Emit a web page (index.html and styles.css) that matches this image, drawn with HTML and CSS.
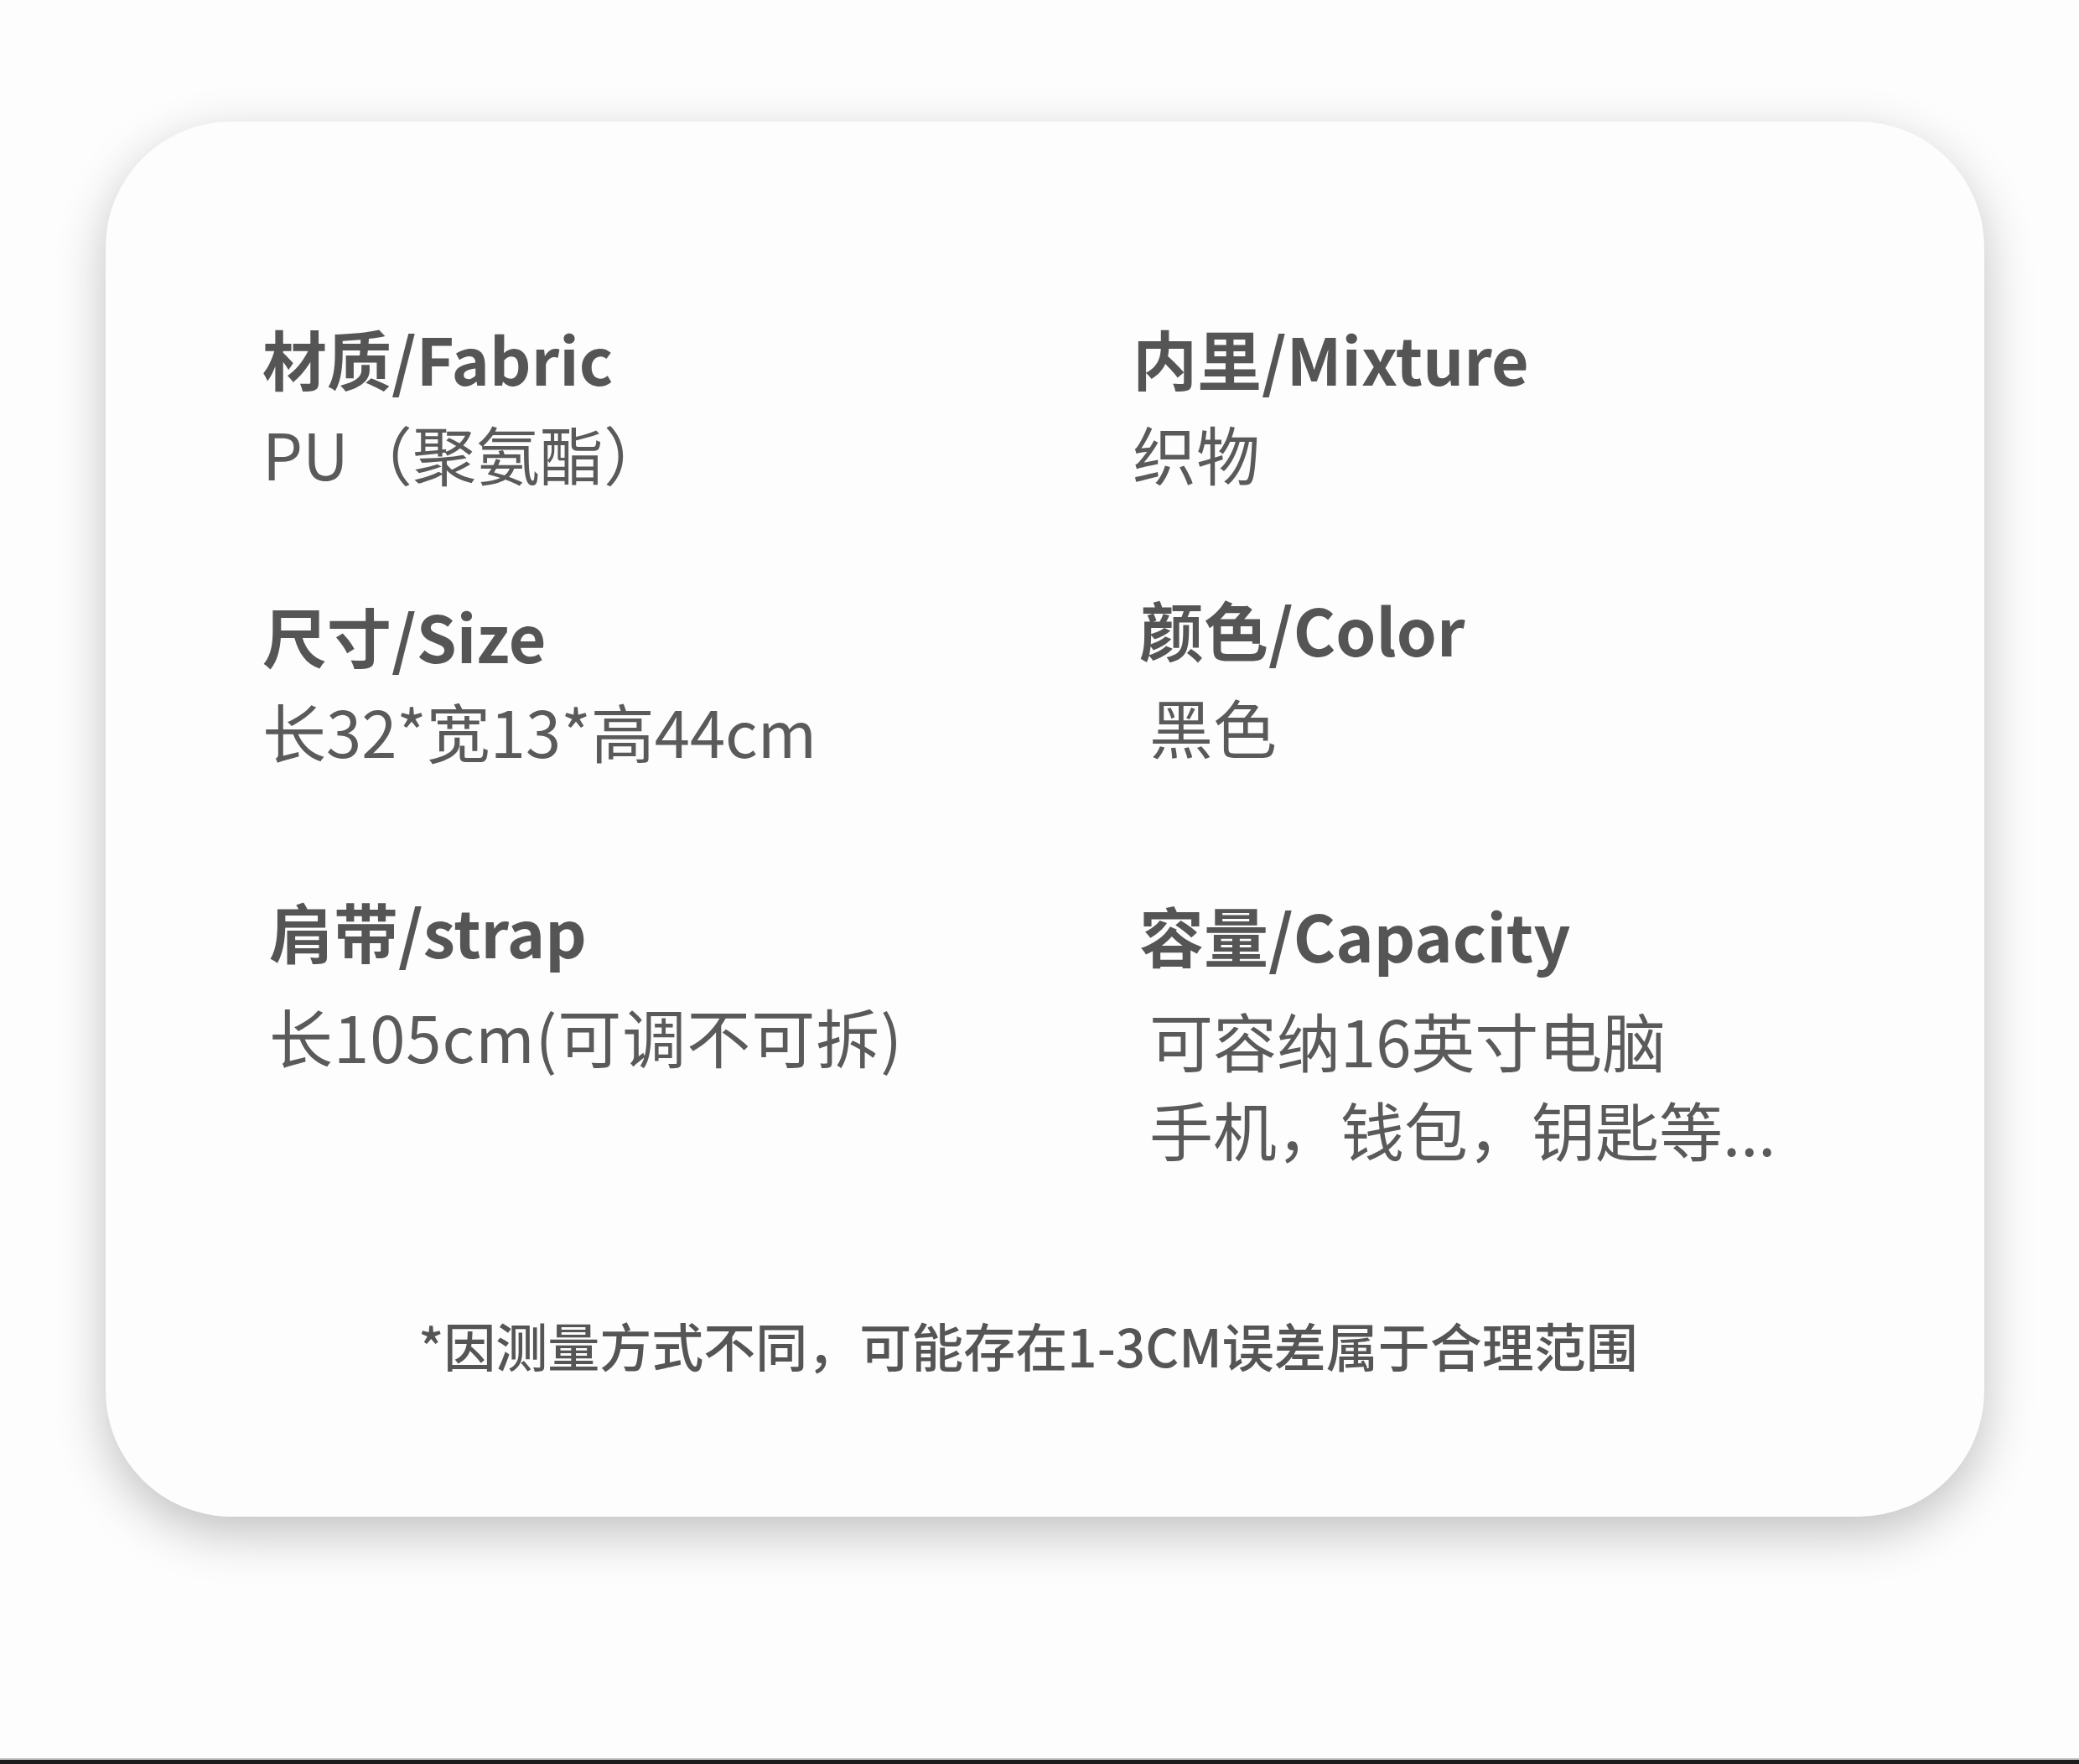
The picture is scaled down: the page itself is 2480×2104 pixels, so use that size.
FILE: index.html
```html
<!DOCTYPE html>
<html lang="zh-CN">
<head>
<meta charset="utf-8">
<title>产品参数</title>
<link rel="stylesheet" href="styles.css">
</head>
<body>
<div class="page">
  <main class="stage">
    <section class="card">
      <div class="row row-1">
        <div class="cell">
          <h2 class="label">材质/Fabric</h2>
          <p class="value">PU（聚氨酯）</p>
        </div>
        <div class="cell">
          <h2 class="label">内里/Mixture</h2>
          <p class="value">织物</p>
        </div>
      </div>
      <div class="row row-2">
        <div class="cell cell-low">
          <h2 class="label">尺寸/Size</h2>
          <p class="value">长32*宽13*高44cm</p>
        </div>
        <div class="cell cell-nudge cell-up">
          <h2 class="label">颜色/Color</h2>
          <p class="value value-indent value-drop">黑色</p>
        </div>
      </div>
      <div class="row row-3">
        <div class="cell cell-nudge">
          <h2 class="label">肩带/strap</h2>
          <p class="value value-gap value-wide">长105cm(可调不可拆)</p>
        </div>
        <div class="cell cell-nudge cell-down">
          <h2 class="label">容量/Capacity</h2>
          <p class="value value-indent value-gap-lg">可容纳16英寸电脑<br>手机，钱包，钥匙等...</p>
        </div>
      </div>
      <p class="note">*因测量方式不同，可能存在1-3CM误差属于合理范围</p>
    </section>
  </main>
  <div class="edge"></div>
</div>
</body>
</html>
```

FILE: styles.css
```css
html, body {
  margin: 0;
  padding: 0;
  background: #fdfdfd;
}

.page {
  width: 2480px;
  height: 2104px;
  display: flex;
  flex-direction: column;
  font-family: "Noto Sans CJK SC", "Noto Sans", sans-serif;
  color: #585858;
}

.stage {
  flex: 1;
  padding: 145px 0 0 126px;
}

.card {
  box-sizing: border-box;
  width: 2241px;
  height: 1664px;
  background: #fdfdfd;
  border-radius: 150px;
  box-shadow: 0 20px 60px rgba(0, 0, 0, 0.24);
  padding: 232px 0 0 187px;
  display: flex;
  flex-direction: column;
}

.row {
  display: grid;
  grid-template-columns: 1038px 1000px;
}

.row-2 { margin-top: 109px; }
.row-3 { margin-top: 136px; }

.cell {
  display: flex;
  flex-direction: column;
}

.cell-low { margin-top: 6px; }
.cell-up { margin-top: -2px; }
.cell-nudge { padding-left: 8px; }
.cell-down { margin-top: 5px; }

.label {
  margin: 0;
  font-size: 77px;
  line-height: 100px;
  font-weight: 700;
  color: #555555;
}

.value {
  margin: 10px 0 0;
  font-size: 76px;
  line-height: 106px;
  font-weight: 400;
  color: #5a5a5a;
}

.value-indent { padding-left: 12px; }
.value-drop { margin-top: 13px; }
.value-gap { margin-top: 22px; }
.value-gap-lg { margin-top: 22px; }
.value-wide { letter-spacing: 1px; }

.note {
  margin: 165px 0 0 -187px;
  padding-right: 40px;
  text-align: center;
  font-size: 62px;
  line-height: 80px;
  font-weight: 500;
  color: #555555;
}

.edge {
  height: 7px;
  background: #1c1c1c;
  border-top: 2px solid #c8c8c8;
  box-sizing: border-box;
}
```
